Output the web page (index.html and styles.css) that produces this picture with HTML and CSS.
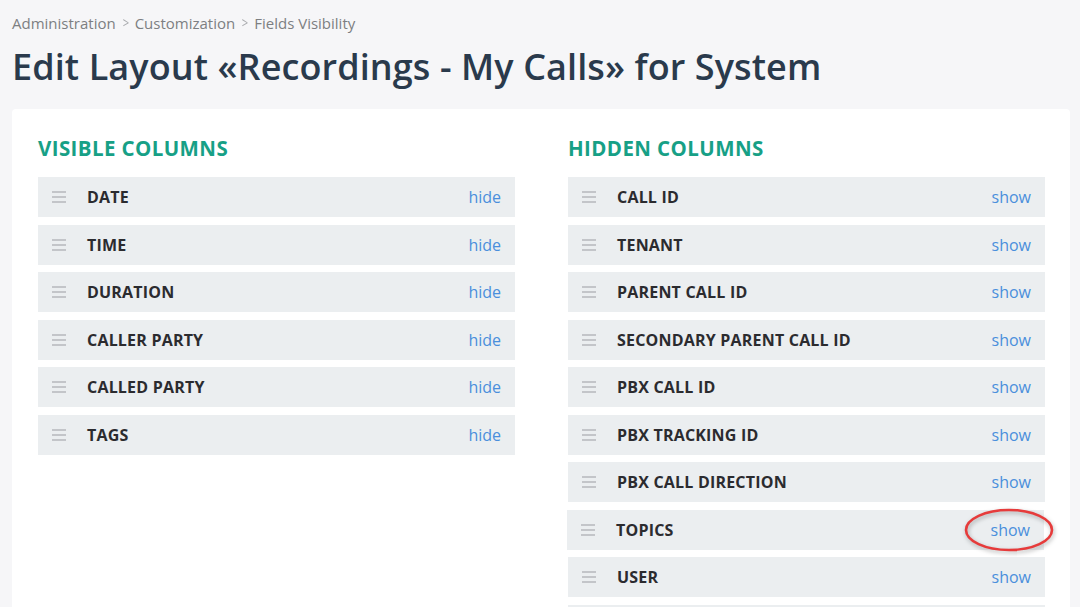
FILE: index.html
```html
<!DOCTYPE html>
<html>
<head>
<meta charset="utf-8">
<link rel="stylesheet" href="styles.css">
</head>
<body>
<div class="page">
  <nav class="crumbs">
    <span>Administration</span><span class="sep">&gt;</span><span>Customization</span><span class="sep">&gt;</span><span>Fields Visibility</span>
  </nav>
  <h1 class="title">Edit Layout «Recordings - My Calls» for System</h1>
  <div class="card">
    <section class="col">
      <h2 class="col-head">VISIBLE COLUMNS</h2>
      <div class="row"><span class="grip"><i></i><i></i><i></i></span><span class="name">DATE</span><a class="act">hide</a></div>
      <div class="row"><span class="grip"><i></i><i></i><i></i></span><span class="name">TIME</span><a class="act">hide</a></div>
      <div class="row"><span class="grip"><i></i><i></i><i></i></span><span class="name">DURATION</span><a class="act">hide</a></div>
      <div class="row"><span class="grip"><i></i><i></i><i></i></span><span class="name">CALLER PARTY</span><a class="act">hide</a></div>
      <div class="row"><span class="grip"><i></i><i></i><i></i></span><span class="name">CALLED PARTY</span><a class="act">hide</a></div>
      <div class="row"><span class="grip"><i></i><i></i><i></i></span><span class="name">TAGS</span><a class="act">hide</a></div>
    </section>
    <section class="col">
      <h2 class="col-head">HIDDEN COLUMNS</h2>
      <div class="row"><span class="grip"><i></i><i></i><i></i></span><span class="name">CALL ID</span><a class="act">show</a></div>
      <div class="row"><span class="grip"><i></i><i></i><i></i></span><span class="name">TENANT</span><a class="act">show</a></div>
      <div class="row"><span class="grip"><i></i><i></i><i></i></span><span class="name">PARENT CALL ID</span><a class="act">show</a></div>
      <div class="row"><span class="grip"><i></i><i></i><i></i></span><span class="name">SECONDARY PARENT CALL ID</span><a class="act">show</a></div>
      <div class="row"><span class="grip"><i></i><i></i><i></i></span><span class="name">PBX CALL ID</span><a class="act">show</a></div>
      <div class="row"><span class="grip"><i></i><i></i><i></i></span><span class="name">PBX TRACKING ID</span><a class="act">show</a></div>
      <div class="row"><span class="grip"><i></i><i></i><i></i></span><span class="name">PBX CALL DIRECTION</span><a class="act">show</a></div>
      <div class="row drag"><span class="grip"><i></i><i></i><i></i></span><span class="name">TOPICS</span><a class="act">show</a>
        <svg class="mark" width="96" height="50" viewBox="0 0 96 50"><ellipse cx="48" cy="25" rx="43" ry="20" fill="none" stroke="#e63b3b" stroke-width="2.6"/></svg>
      </div>
      <div class="row"><span class="grip"><i></i><i></i><i></i></span><span class="name">USER</span><a class="act">show</a></div>
      <div class="row"></div>
    </section>
  </div>
</div>
</body>
</html>
```

FILE: styles.css
```css
html, body {
  margin: 0;
  padding: 0;
  background: #f6f6f8;
  font-family: "Open Sans", "Liberation Sans", sans-serif;
  overflow: hidden;
  height: 607px;
}
.page {
  padding: 12px 10px 0 12px;
}
.crumbs {
  font-size: 15px;
  color: #7d7f82;
  line-height: 22px;
  display: flex;
  align-items: center;
}
.crumbs .sep {
  color: #a8aaad;
  margin: 0 5px 0 6px;
  font-size: 14px;
  transform: scaleX(0.8);
}
.title {
  margin: 11px 0 0 0;
  font-size: 36px;
  font-weight: 600;
  color: #2a3a4c;
  line-height: 44px;
  letter-spacing: 0.1px;
}
.card {
  margin-top: 20px;
  background: #fff;
  border-radius: 4px;
  padding: 26px 25px 0 26px;
  display: grid;
  grid-template-columns: 477px 477px;
  column-gap: 53px;
  height: 600px;
}
.col-head {
  margin: -1px 0 15px 0;
  font-size: 20.5px;
  font-weight: 700;
  color: #17a086;
  line-height: 28px;
  letter-spacing: 0.4px;
}
.row {
  position: relative;
  display: flex;
  align-items: center;
  height: 40px;
  background: #ebeef0;
  margin-bottom: 7.5px;
  padding: 0 14px 0 14px;
}
.row.drag {
  left: -1px;
}
.grip {
  display: flex;
  flex-direction: column;
  gap: 3px;
  width: 14px;
  margin-right: 21px;
}
.grip i {
  display: block;
  height: 2px;
  background: #c3c5c9;
}
.name {
  flex: 1;
  font-size: 16px;
  font-weight: 700;
  color: #2b2b2f;
  letter-spacing: 0.2px;
}
.act {
  font-size: 16px;
  color: #4a8fdc;
}
.mark {
  position: absolute;
  right: -13px;
  top: -5px;
  filter: drop-shadow(1px 2px 2px rgba(0,0,0,0.3));
}
```
